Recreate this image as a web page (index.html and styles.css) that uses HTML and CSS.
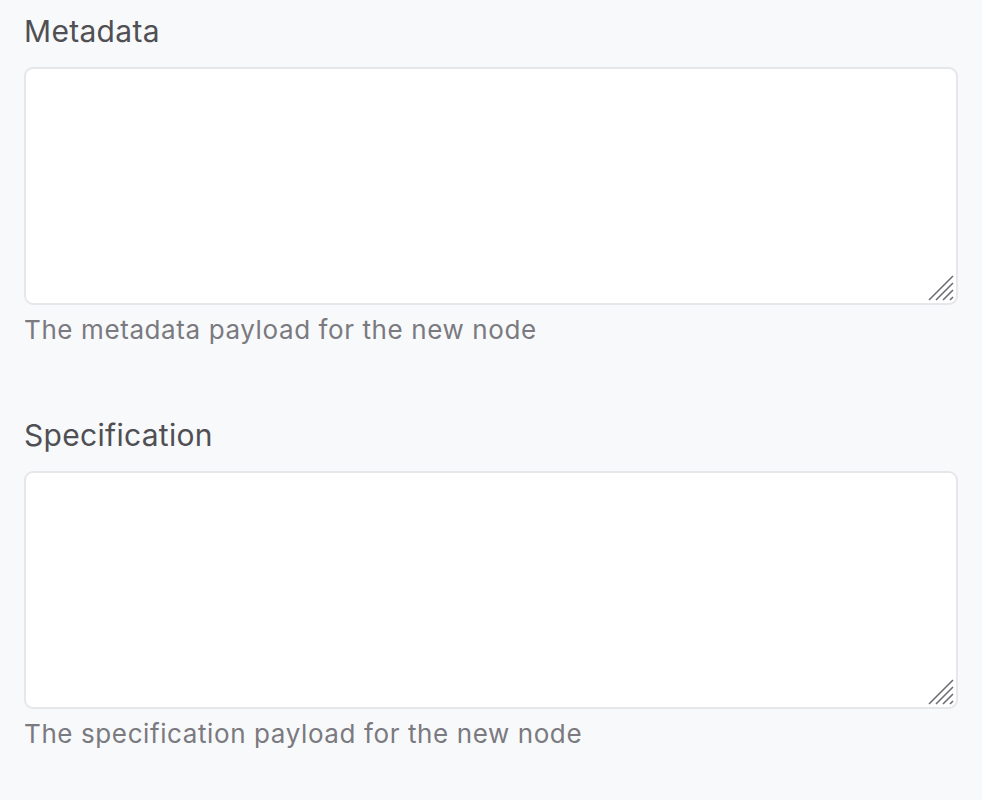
FILE: index.html
```html
<!DOCTYPE html>
<html lang="en">
<head>
<meta charset="utf-8">
<title>New node</title>
<link rel="stylesheet" href="styles.css">
</head>
<body>
<form class="form">
  <div class="field">
    <label class="label" for="metadata">Metadata</label>
    <div class="area-wrap">
      <textarea id="metadata" class="area"></textarea>
      <svg class="grip" width="26" height="26" viewBox="0 0 26 26" aria-hidden="true">
        <path d="M1 25 L25 1 M8 25 L25 8 M15 25 L25 15 M22 25 L25 22" stroke="#6e6e72" stroke-width="1.6" fill="none"/>
      </svg>
    </div>
    <p class="help">The metadata payload for the new node</p>
  </div>
  <div class="field">
    <label class="label" for="specification">Specification</label>
    <div class="area-wrap">
      <textarea id="specification" class="area"></textarea>
      <svg class="grip" width="26" height="26" viewBox="0 0 26 26" aria-hidden="true">
        <path d="M1 25 L25 1 M8 25 L25 8 M15 25 L25 15 M22 25 L25 22" stroke="#6e6e72" stroke-width="1.6" fill="none"/>
      </svg>
    </div>
    <p class="help">The specification payload for the new node</p>
  </div>
</form>
</body>
</html>
```
FILE: styles.css
```css
html, body {
  margin: 0;
  padding: 0;
  background: #f8f9fb;
}
body {
  font-family: Inter, "Noto Sans", "Liberation Sans", sans-serif;
}
.form {
  padding: 13px 24px 0 24px;
  display: flex;
  flex-direction: column;
  gap: 71px;
}
.field {
  display: flex;
  flex-direction: column;
}
.label {
  font-size: 30px;
  line-height: 36px;
  letter-spacing: 0.3px;
  color: #4f4f54;
  margin-bottom: 18px;
}
.area-wrap {
  position: relative;
}
.area {
  display: block;
  box-sizing: border-box;
  width: 100%;
  height: 238px;
  margin: 0;
  background: #ffffff;
  border: 2px solid #e6e6eb;
  border-radius: 9px;
  resize: none;
  outline: none;
  font: inherit;
}
.grip {
  position: absolute;
  right: 4px;
  bottom: 4px;
  pointer-events: none;
}
.help {
  margin: 9px 0 0 0;
  font-size: 26px;
  line-height: 32px;
  letter-spacing: 0.6px;
  color: #7a7a80;
}
```
